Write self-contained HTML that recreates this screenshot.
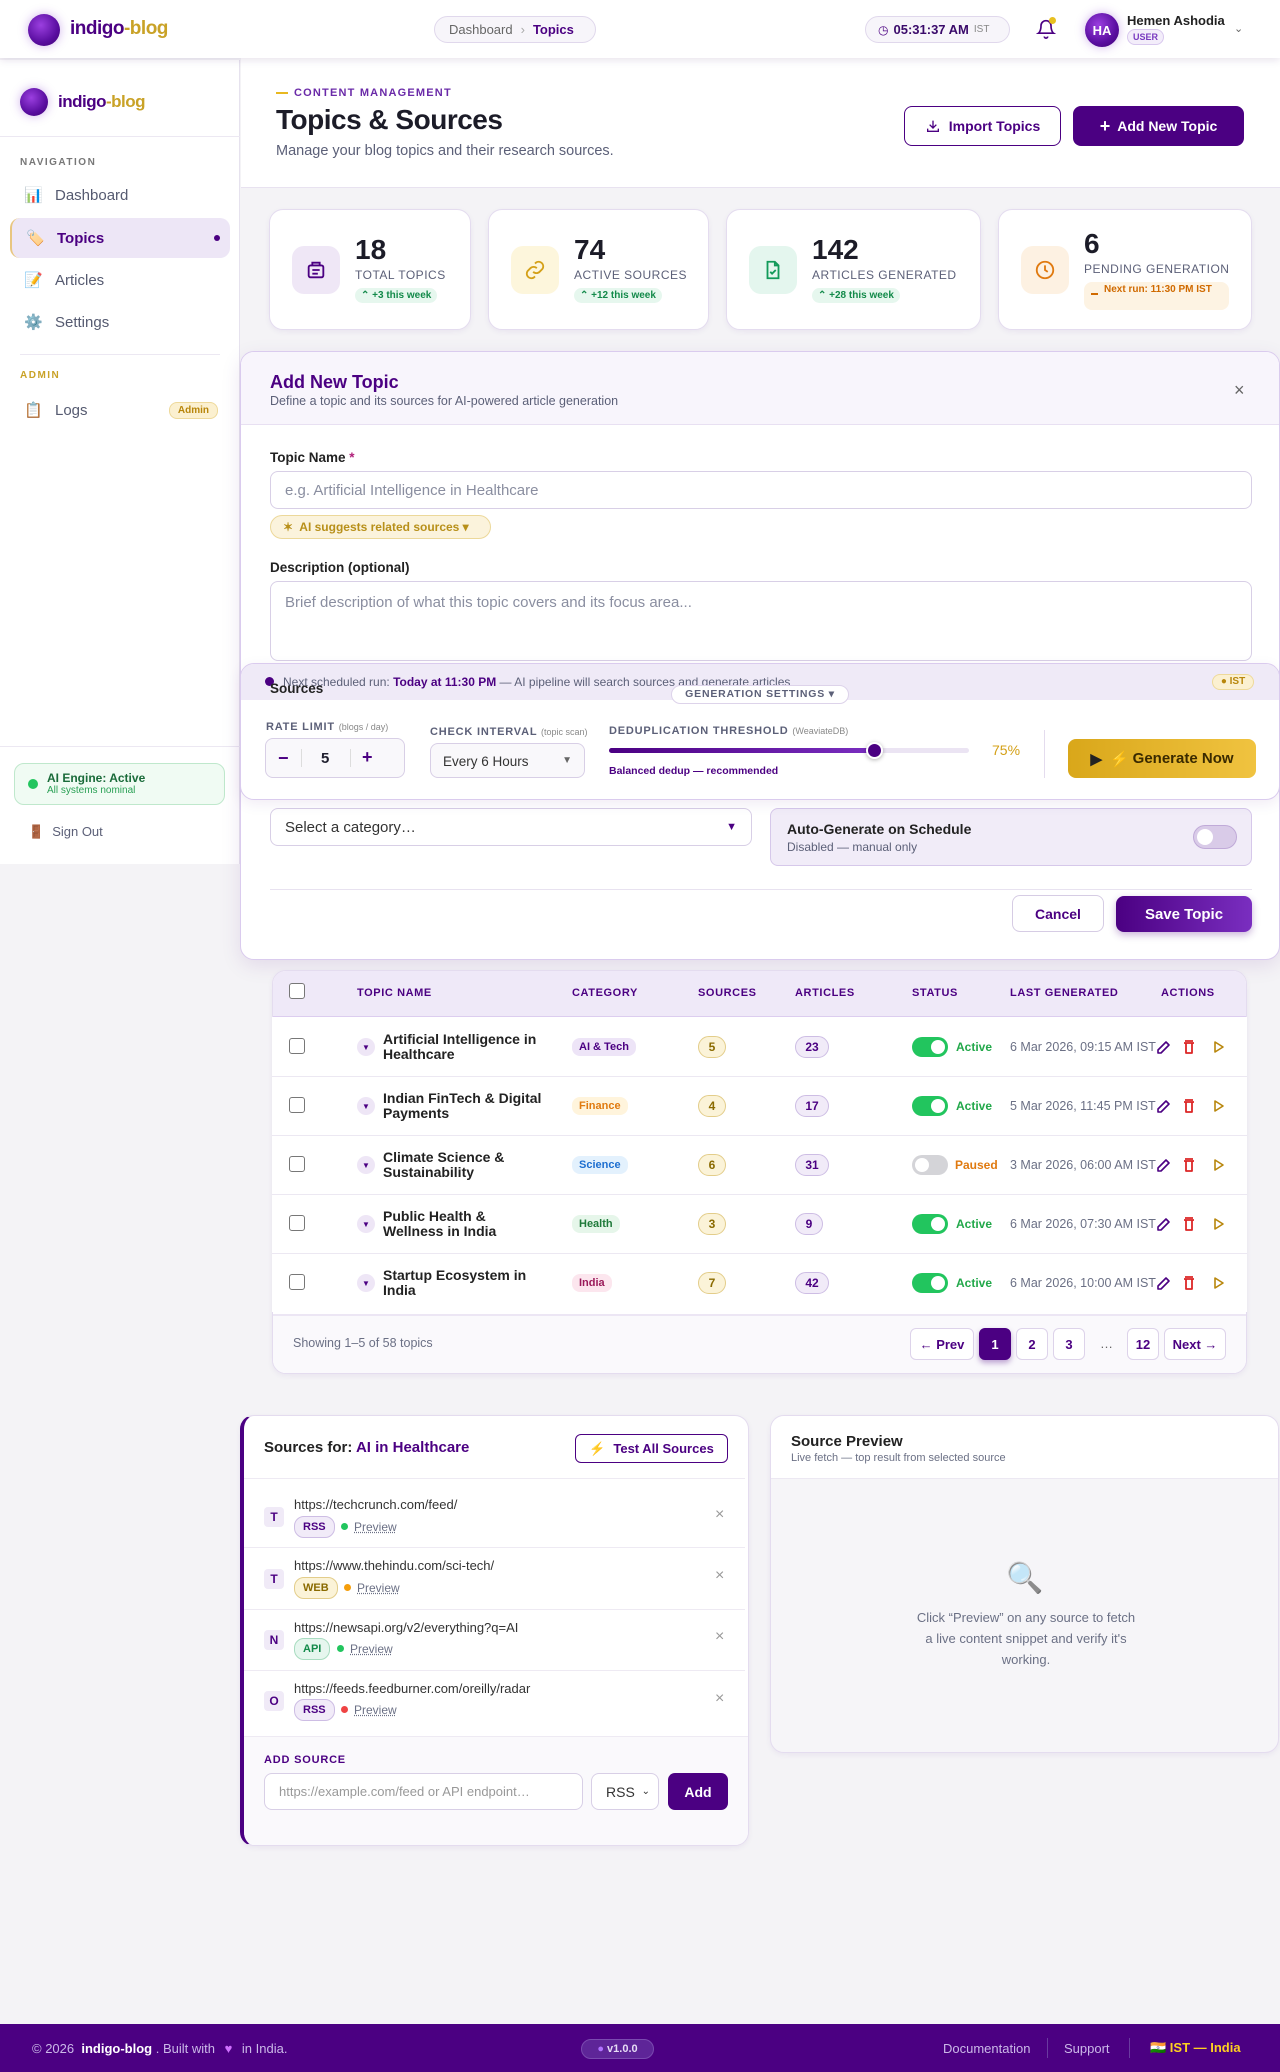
<!DOCTYPE html>
<html><head><meta charset="utf-8">
<style>
*{box-sizing:border-box;margin:0;padding:0}
body{width:1280px;height:2072px;position:relative;background:#f4f3f6;font-family:"Liberation Sans",Arial,sans-serif;color:#1f1f2e;overflow:hidden}
.a{position:absolute}
.pill{border-radius:999px}
.hdr{left:0;top:0;width:1280px;height:58px;background:#fff;box-shadow:0 2px 8px rgba(60,20,100,.12);z-index:5}
.orb{border-radius:50%;background:radial-gradient(circle at 40% 35%,#9b3fe0,#5a0ea0 60%,#3d0070);box-shadow:0 0 10px rgba(120,40,200,.35)}
.logo{font-weight:700;color:#4b0082;letter-spacing:-.5px}
.logo span{color:#c9a227}
.side{left:0;top:60px;width:240px;height:804px;background:#fff;border-right:1px solid #e6e2ee}
.nav{left:10px;width:220px;height:40px;border-radius:10px;font-size:15px;color:#555a70;display:flex;align-items:center;padding-left:14px}
.nav i{font-style:normal;width:31px;font-size:15px}
.card{background:#fff;border:1px solid #e4dcef;border-radius:14px;box-shadow:0 2px 6px rgba(75,0,130,.06)}
.ico{width:48px;height:48px;border-radius:12px;display:flex;align-items:center;justify-content:center}
.num{font-size:28px;font-weight:700;color:#1c1c28}
.lbl{font-size:12px;color:#5c6078;letter-spacing:.5px}
.up{font-size:10px;font-weight:700;color:#138a4a;background:#e6f7ee;border-radius:8px;padding:2px 6px}
.inp{background:#fff;border:1px solid #d8cfe6;border-radius:8px;font-size:15px;color:#8a8ea0;padding-left:14px;display:flex;align-items:center}
.th{font-size:11px;font-weight:700;color:#4b0082;letter-spacing:.6px;top:987px}
.row{left:272px;width:975px;height:59px;border-top:1px solid #ece8f2;background:#fff}
.cb{width:16px;height:16px;border:1.5px solid #777;border-radius:3px;background:#fff}
.car{width:18px;height:18px;border-radius:50%;background:#eee6f6;color:#4b0082;font-size:8px;display:flex;align-items:center;justify-content:center}
.tn{font-size:14px;font-weight:700;color:#222;line-height:15px;width:160px}
.cat{font-size:11px;font-weight:700;border-radius:8px;padding:3px 7px}
.cnt{height:22px;border-radius:11px;font-size:12px;font-weight:700;display:flex;align-items:center;justify-content:center}
.tg{width:36px;height:20px;border-radius:10px;background:#22c55e}
.tg:after{content:"";position:absolute;right:3px;top:3px;width:14px;height:14px;border-radius:50%;background:#fff}
.tg.off{background:#d4d4d8}.tg.off:after{left:3px;right:auto}
.st{font-size:12px;font-weight:700;color:#22a84a}
.dt{font-size:12.5px;color:#6b7085}
.pg{height:32px;border:1px solid #ddd3ea;border-radius:6px;background:#fff;font-size:13px;font-weight:700;color:#4b0082;display:flex;align-items:center;justify-content:center}
.src{left:244px;width:505px;height:62px;border-top:1px solid #eeeaf3;background:#fff}
.let{width:20px;height:20px;border-radius:4px;background:#f0eaf7;color:#4b0082;font-size:12px;font-weight:700;display:flex;align-items:center;justify-content:center}
.url{font-size:13px;color:#333}
.bd{font-size:11px;font-weight:700;border-radius:10px;padding:4px 8px}
.dot{width:7px;height:7px;border-radius:50%}
.pv{font-size:12px;color:#6b7085;text-decoration:underline dotted}
.x{font-size:16px;color:#999}
</style></head><body>

<div class="a hdr">
  <div class="a orb" style="left:28px;top:14px;width:32px;height:32px"></div>
  <div class="a logo" style="left:70px;top:18px;font-size:19px">indigo<span>-blog</span></div>
  <div class="a pill" style="left:434px;top:16px;width:162px;height:27px;border:1px solid #e0d8ec;background:#f7f5fa;font-size:13px;color:#666;display:flex;align-items:center;padding-left:14px">Dashboard <span style="margin:0 8px;color:#aaa">›</span><b style="color:#4b0082">Topics</b></div>
  <div class="a pill" style="left:865px;top:16px;width:145px;height:27px;border:1px solid #e0d8ec;background:#f7f5fa;font-size:13px;display:flex;align-items:center;padding-left:12px"><span style="color:#4b0082;font-size:12px;margin-right:5px">◷</span><b style="color:#3a0a6a">05:31:37 AM</b><span style="font-size:10px;color:#888;margin-left:5px">IST</span></div>
  <svg class="a" style="left:1036px;top:18px" width="20" height="22" viewBox="0 0 24 24" fill="none" stroke="#4b0082" stroke-width="2"><path d="M6 8a6 6 0 0112 0c0 7 3 9 3 9H3s3-2 3-9M10 21a2 2 0 004 0"/></svg>
  <div class="a" style="left:1049px;top:17px;width:7px;height:7px;border-radius:50%;background:#e8c020"></div>
  <div class="a orb" style="left:1085px;top:13px;width:34px;height:34px;color:#fff;font-size:13px;font-weight:700;display:flex;align-items:center;justify-content:center">HA</div>
  <div class="a" style="left:1127px;top:13px;font-size:13px;font-weight:700;color:#222">Hemen Ashodia</div>
  <div class="a" style="left:1127px;top:29px;font-size:9px;font-weight:700;color:#7a3bc0;border:1px solid #d8c8ee;background:#f3edfa;border-radius:8px;padding:2px 5px">USER</div>
  <div class="a" style="left:1234px;top:22px;font-size:11px;color:#666">⌄</div>
</div>

<div class="a side">
  <div class="a orb" style="left:20px;top:28px;width:28px;height:28px"></div>
  <div class="a logo" style="left:58px;top:32px;font-size:17px">indigo<span>-blog</span></div>
  <div class="a" style="left:0;top:76px;width:240px;height:1px;background:#ece8f2"></div>
  <div class="a" style="left:20px;top:97px;font-size:10px;font-weight:700;letter-spacing:1.5px;color:#777">NAVIGATION</div>
  <div class="a nav" style="top:115px"><i>📊</i>Dashboard</div>
  <div class="a nav" style="top:158px;background:#ede6f6;border-left:2px solid #e8c680;color:#4b0082;font-weight:700"><i>🏷️</i>Topics<span style="position:absolute;right:10px;top:17px;width:6px;height:6px;border-radius:50%;background:#4b0082"></span></div>
  <div class="a nav" style="top:200px"><i>📝</i>Articles</div>
  <div class="a nav" style="top:242px"><i>⚙️</i>Settings</div>
  <div class="a" style="left:20px;top:294px;width:200px;height:1px;background:#ece8f2"></div>
  <div class="a" style="left:20px;top:310px;font-size:10px;font-weight:700;letter-spacing:1.5px;color:#c9a227">ADMIN</div>
  <div class="a nav" style="top:330px"><i>📋</i>Logs<span style="position:absolute;right:12px;font-size:10px;font-weight:700;color:#b8860b;background:#fbf0d0;border:1px solid #eed99a;border-radius:8px;padding:2px 8px">Admin</span></div>
  <div class="a" style="left:0;top:686px;width:240px;height:1px;background:#ece8f2"></div>
  <div class="a" style="left:14px;top:703px;width:211px;height:42px;border:1px solid #bfe8cc;background:#f0fbf3;border-radius:10px">
    <div class="a" style="left:13px;top:15px;width:10px;height:10px;border-radius:50%;background:#22c55e"></div>
    <div class="a" style="left:32px;top:7px;font-size:12px;font-weight:700;color:#1a6b3a">AI Engine: Active</div>
    <div class="a" style="left:32px;top:21px;font-size:10px;color:#2aa055">All systems nominal</div>
  </div>
  <div class="a" style="left:28px;top:764px;font-size:13px;color:#5c6078"><span style="margin-right:8px">🚪</span>Sign Out</div>
</div>

<div class="a" style="left:241px;top:58px;width:1039px;height:130px;background:#fff;border-bottom:1px solid #e8e2f0"></div>
<div class="a" style="left:276px;top:87px;font-size:11px;font-weight:700;letter-spacing:1.2px;color:#6a2aa8"><span style="display:inline-block;width:12px;height:2px;background:#e8b820;vertical-align:middle;margin-right:6px"></span>CONTENT MANAGEMENT</div>
<div class="a" style="left:276px;top:104px;font-size:28px;font-weight:700;color:#1c1c28;letter-spacing:-.5px">Topics &amp; Sources</div>
<div class="a" style="left:276px;top:143px;font-size:14.5px;color:#5c6078">Manage your blog topics and their research sources.</div>
<div class="a" style="left:904px;top:106px;width:157px;height:40px;border:1.5px solid #4b0082;border-radius:8px;background:#fff;color:#4b0082;font-size:14px;font-weight:700;display:flex;align-items:center;justify-content:center"><svg width="16" height="16" viewBox="0 0 24 24" fill="none" stroke="#4b0082" stroke-width="2" style="margin-right:8px"><path d="M12 4v11M7 10l5 5 5-5M4 16v4h16v-4"/></svg>Import Topics</div>
<div class="a" style="left:1073px;top:106px;width:171px;height:40px;border-radius:8px;background:#4b0082;color:#fff;font-size:14px;font-weight:700;display:flex;align-items:center;justify-content:center"><span style="font-size:18px;margin-right:7px">+</span>Add New Topic</div>

<div class="a card" style="left:269px;top:209px;width:202px;height:121px">
  <div class="a ico" style="left:22px;top:36px;background:#efe7f6"><svg width="22" height="22" viewBox="0 0 24 24" fill="none" stroke="#4b0082" stroke-width="2"><rect x="4" y="7" width="16" height="13" rx="2"/><path d="M8 7V4h8v3M8 12h8M8 16h6"/></svg></div>
  <div class="a num" style="left:85px;top:24px">18</div><div class="a lbl" style="left:85px;top:58px">TOTAL TOPICS</div><div class="a up" style="left:85px;top:78px">⌃ +3 this week</div>
</div>
<div class="a card" style="left:488px;top:209px;width:221px;height:121px">
  <div class="a ico" style="left:22px;top:36px;background:#fdf6dc"><svg width="22" height="22" viewBox="0 0 24 24" fill="none" stroke="#d4a017" stroke-width="2"><path d="M10 14a5 5 0 007 0l3-3a5 5 0 00-7-7l-1 1M14 10a5 5 0 00-7 0l-3 3a5 5 0 007 7l1-1"/></svg></div>
  <div class="a num" style="left:85px;top:24px">74</div><div class="a lbl" style="left:85px;top:58px">ACTIVE SOURCES</div><div class="a up" style="left:85px;top:78px">⌃ +12 this week</div>
</div>
<div class="a card" style="left:726px;top:209px;width:255px;height:121px">
  <div class="a ico" style="left:22px;top:36px;background:#e4f6ee"><svg width="22" height="22" viewBox="0 0 24 24" fill="none" stroke="#129a5a" stroke-width="2"><path d="M14 3H6v18h12V7zM14 3v4h4M9 14l2 2 4-4"/></svg></div>
  <div class="a num" style="left:85px;top:24px">142</div><div class="a lbl" style="left:85px;top:58px">ARTICLES GENERATED</div><div class="a up" style="left:85px;top:78px">⌃ +28 this week</div>
</div>
<div class="a card" style="left:998px;top:209px;width:254px;height:121px">
  <div class="a ico" style="left:22px;top:36px;background:#fdf1e2"><svg width="22" height="22" viewBox="0 0 24 24" fill="none" stroke="#e07a10" stroke-width="2"><circle cx="12" cy="12" r="9"/><path d="M12 7v5l3 2"/></svg></div>
  <div class="a num" style="left:85px;top:18px">6</div><div class="a lbl" style="left:85px;top:52px">PENDING GENERATION</div>
  <div class="a" style="left:85px;top:72px;width:145px;height:28px;background:#fdf3e3;border-radius:8px;font-size:10px;font-weight:700;color:#d06a00;padding:2px 8px 0 20px;line-height:12px"><span style="position:absolute;left:7px;top:11px;width:7px;height:2px;background:#d06a00"></span>Next run: 11:30 PM IST</div>
</div>

<div class="a" style="left:240px;top:351px;width:1040px;height:609px;background:#fff;border:1px solid #dacbee;border-radius:14px;box-shadow:0 6px 20px rgba(75,0,130,.1);overflow:hidden">
  <div class="a" style="left:0;top:0;width:1040px;height:73px;background:#f8f5fc;border-bottom:1px solid #e8e0f2"></div>
  <div class="a" style="left:29px;top:20px;font-size:18px;font-weight:700;color:#4b0082">Add New Topic</div>
  <div class="a" style="left:29px;top:42px;font-size:12.5px;color:#5c6078">Define a topic and its sources for AI-powered article generation</div>
  <div class="a" style="left:993px;top:28px;font-size:18px;color:#666">×</div>
  <div class="a" style="left:29px;top:98px;font-size:13.5px;font-weight:700;color:#222">Topic Name <span style="color:#b0207a">*</span></div>
  <div class="a inp" style="left:29px;top:119px;width:982px;height:38px">e.g. Artificial Intelligence in Healthcare</div>
  <div class="a pill" style="left:29px;top:163px;width:221px;height:24px;background:#fbf3dc;border:1px solid #ecd89a;font-size:12px;font-weight:700;color:#b8901a;display:flex;align-items:center;padding-left:12px">✶&nbsp; AI suggests related sources ▾</div>
  <div class="a" style="left:29px;top:208px;font-size:13.5px;font-weight:700;color:#222">Description (optional)</div>
  <div class="a inp" style="left:29px;top:229px;width:982px;height:80px;align-items:flex-start;padding-top:12px">Brief description of what this topic covers and its focus area...</div>
  <div class="a inp" style="left:29px;top:456px;width:482px;height:38px;color:#333">Select a category…<span style="position:absolute;right:14px;color:#4b0082;font-size:11px">▼</span></div>
  <div class="a" style="left:529px;top:456px;width:482px;height:58px;background:#f1ecf8;border:1px solid #d6c8ea;border-radius:8px">
    <div class="a" style="left:16px;top:12px;font-size:14px;font-weight:700;color:#222">Auto-Generate on Schedule</div>
    <div class="a" style="left:16px;top:31px;font-size:12px;color:#5c6078">Disabled — manual only</div>
    <div class="a" style="left:422px;top:16px;width:44px;height:24px;border-radius:12px;background:#d9cbe8;border:1px solid #c0aad8"><div class="a" style="left:3px;top:3px;width:16px;height:16px;border-radius:50%;background:#fff"></div></div>
  </div>
  <div class="a" style="left:29px;top:537px;width:982px;height:1px;background:#e8e2f0"></div>
  <div class="a" style="left:771px;top:543px;width:92px;height:37px;border:1px solid #d6cce4;border-radius:8px;font-size:14px;font-weight:700;color:#4b0082;display:flex;align-items:center;justify-content:center;background:#fff">Cancel</div>
  <div class="a" style="left:875px;top:544px;width:136px;height:36px;border-radius:8px;background:linear-gradient(90deg,#4b0082,#7a2ec0);font-size:15px;font-weight:700;color:#fff;display:flex;align-items:center;justify-content:center;box-shadow:0 3px 8px rgba(75,0,130,.3)">Save Topic</div>
</div>

<div class="a" style="left:240px;top:663px;width:1040px;height:137px;background:#fff;border:1px solid #dacbee;border-radius:14px;box-shadow:0 4px 14px rgba(75,0,130,.08);overflow:hidden">
  <div class="a" style="left:0;top:0;width:1040px;height:36px;background:#efeaf7"></div>
  <div class="a" style="left:24px;top:13px;width:9px;height:9px;border-radius:50%;background:#4b0082"></div>
  <div class="a" style="left:42px;top:11px;font-size:12px;color:#5c6078">Next scheduled run: <b style="color:#4b0082">Today at 11:30 PM</b> — AI pipeline will search sources and generate articles</div>
  <div class="a" style="left:29px;top:17px;font-size:13.5px;font-weight:700;color:#222">Sources</div>
  <div class="a pill" style="left:971px;top:10px;width:42px;height:16px;background:#fbf0d0;border:1px solid #eed99a;font-size:10px;font-weight:700;color:#b8860b;text-align:center;line-height:14px">● IST</div>
  <div class="a" style="left:25px;top:57px;font-size:11px;font-weight:700;color:#5c6078;letter-spacing:.8px">RATE LIMIT <span style="font-size:9px;font-weight:400;letter-spacing:0;color:#888">(blogs / day)</span></div>
  <div class="a" style="left:24px;top:74px;width:140px;height:40px;border:1px solid #d8cfe6;border-radius:8px;background:#f9f8fb;font-size:15px">
    <span class="a" style="left:12px;top:9px;font-weight:700;color:#4b0082;font-size:18px">−</span>
    <span class="a" style="left:35px;top:10px;width:1px;height:18px;background:#ddd"></span>
    <span class="a" style="left:55px;top:11px;font-weight:700">5</span>
    <span class="a" style="left:84px;top:10px;width:1px;height:18px;background:#ddd"></span>
    <span class="a" style="left:96px;top:8px;font-weight:700;color:#4b0082;font-size:18px">+</span>
  </div>
  <div class="a" style="left:189px;top:62px;font-size:11px;font-weight:700;color:#5c6078;letter-spacing:.8px">CHECK INTERVAL <span style="font-size:9px;font-weight:400;letter-spacing:0;color:#888">(topic scan)</span></div>
  <div class="a" style="left:189px;top:79px;width:155px;height:35px;border:1px solid #d8cfe6;border-radius:8px;background:#f9f8fb;font-size:13.5px;color:#333;padding:10px 0 0 12px">Every 6 Hours<span style="position:absolute;right:12px;top:11px;font-size:10px;color:#666">▼</span></div>
  <div class="a" style="left:368px;top:61px;font-size:11px;font-weight:700;color:#5c6078;letter-spacing:.8px">DEDUPLICATION THRESHOLD <span style="font-size:9px;font-weight:400;letter-spacing:0;color:#888">(WeaviateDB)</span></div>
  <div class="a" style="left:368px;top:84px;width:360px;height:5px;border-radius:3px;background:#ebe4f3"></div>
  <div class="a" style="left:368px;top:84px;width:265px;height:5px;border-radius:3px;background:linear-gradient(90deg,#4b0082,#7a2ec0)"></div>
  <div class="a" style="left:625px;top:78px;width:17px;height:17px;border-radius:50%;background:#4b0082;border:2px solid #fff;box-shadow:0 1px 4px rgba(0,0,0,.3)"></div>
  <div class="a" style="left:751px;top:78px;font-size:14px;color:#d4a017">75%</div>
  <div class="a" style="left:368px;top:101px;font-size:10.5px;font-weight:700;color:#4b0082">Balanced dedup — recommended</div>
  <div class="a" style="left:803px;top:66px;width:1px;height:48px;background:#e4dcee"></div>
  <div class="a" style="left:827px;top:75px;width:188px;height:39px;border-radius:8px;background:linear-gradient(90deg,#d9a71a,#f0c340);font-size:15px;font-weight:700;color:#3a2a00;display:flex;align-items:center;justify-content:center"><span style="color:#222;margin-right:8px">▶</span><span style="color:#f5d020;margin-right:4px">⚡</span>Generate Now</div>
</div>
<div class="a pill" style="left:671px;top:685px;width:178px;height:19px;background:#fff;border:1px solid #ddd3ea;font-size:10.5px;font-weight:700;color:#5c6078;letter-spacing:.8px;text-align:center;line-height:17px">GENERATION SETTINGS ▾</div>

<div class="a card" style="left:272px;top:970px;width:975px;height:404px;overflow:hidden;border-radius:14px">
  <div class="a" style="left:0;top:0;width:975px;height:47px;background:#efe9f8;border-bottom:2px solid #dccdef"></div>
  <div class="a" style="left:0;top:343px;width:975px;height:61px;background:#faf9fc;border-top:2px solid #ece6f4"></div>
</div>
<div class="a cb" style="left:289px;top:983px"></div>
<div class="a th" style="left:357px">TOPIC NAME</div><div class="a th" style="left:572px">CATEGORY</div><div class="a th" style="left:698px">SOURCES</div><div class="a th" style="left:795px">ARTICLES</div><div class="a th" style="left:912px">STATUS</div><div class="a th" style="left:1010px">LAST GENERATED</div><div class="a th" style="left:1161px">ACTIONS</div>

<div class="a row" style="top:1017px;border-top:none"></div>
<div class="a row" style="top:1076px"></div>
<div class="a row" style="top:1135px"></div>
<div class="a row" style="top:1194px"></div>
<div class="a row" style="top:1253px"></div>

<div class="a cb" style="left:289px;top:1038px"></div><div class="a car" style="left:357px;top:1038px">▼</div>
<div class="a tn" style="left:383px;top:1032px">Artificial Intelligence in Healthcare</div>
<div class="a cat" style="left:572px;top:1038px;background:#ede4f7;color:#4b0082">AI &amp; Tech</div>
<div class="a cnt" style="left:698px;top:1036px;width:28px;background:#fbf3d8;border:1px solid #e3cd8a;color:#8a6a00">5</div>
<div class="a cnt" style="left:795px;top:1036px;width:34px;background:#f1ebf8;border:1px solid #cdbde4;color:#4b0082">23</div>
<div class="a tg" style="left:912px;top:1037px"></div><div class="a st" style="left:956px;top:1040px">Active</div>
<div class="a dt" style="left:1010px;top:1040px">6 Mar 2026, 09:15 AM IST</div>

<div class="a cb" style="left:289px;top:1097px"></div><div class="a car" style="left:357px;top:1097px">▼</div>
<div class="a tn" style="left:383px;top:1091px">Indian FinTech &amp; Digital Payments</div>
<div class="a cat" style="left:572px;top:1097px;background:#fff4dc;color:#e07a10">Finance</div>
<div class="a cnt" style="left:698px;top:1095px;width:28px;background:#fbf3d8;border:1px solid #e3cd8a;color:#8a6a00">4</div>
<div class="a cnt" style="left:795px;top:1095px;width:34px;background:#f1ebf8;border:1px solid #cdbde4;color:#4b0082">17</div>
<div class="a tg" style="left:912px;top:1096px"></div><div class="a st" style="left:956px;top:1099px">Active</div>
<div class="a dt" style="left:1010px;top:1099px">5 Mar 2026, 11:45 PM IST</div>

<div class="a cb" style="left:289px;top:1156px"></div><div class="a car" style="left:357px;top:1156px">▼</div>
<div class="a tn" style="left:383px;top:1150px">Climate Science &amp; Sustainability</div>
<div class="a cat" style="left:572px;top:1156px;background:#e3f1fd;color:#1e6fd0">Science</div>
<div class="a cnt" style="left:698px;top:1154px;width:28px;background:#fbf3d8;border:1px solid #e3cd8a;color:#8a6a00">6</div>
<div class="a cnt" style="left:795px;top:1154px;width:34px;background:#f1ebf8;border:1px solid #cdbde4;color:#4b0082">31</div>
<div class="a tg off" style="left:912px;top:1155px"></div><div class="a st" style="left:955px;top:1158px;color:#e07a10">Paused</div>
<div class="a dt" style="left:1010px;top:1158px">3 Mar 2026, 06:00 AM IST</div>

<div class="a cb" style="left:289px;top:1215px"></div><div class="a car" style="left:357px;top:1215px">▼</div>
<div class="a tn" style="left:383px;top:1209px">Public Health &amp; Wellness in India</div>
<div class="a cat" style="left:572px;top:1215px;background:#e6f6ea;color:#1f7a3a">Health</div>
<div class="a cnt" style="left:698px;top:1213px;width:28px;background:#fbf3d8;border:1px solid #e3cd8a;color:#8a6a00">3</div>
<div class="a cnt" style="left:795px;top:1213px;width:28px;background:#f1ebf8;border:1px solid #cdbde4;color:#4b0082">9</div>
<div class="a tg" style="left:912px;top:1214px"></div><div class="a st" style="left:956px;top:1217px">Active</div>
<div class="a dt" style="left:1010px;top:1217px">6 Mar 2026, 07:30 AM IST</div>

<div class="a cb" style="left:289px;top:1274px"></div><div class="a car" style="left:357px;top:1274px">▼</div>
<div class="a tn" style="left:383px;top:1268px">Startup Ecosystem in India</div>
<div class="a cat" style="left:572px;top:1274px;background:#fce6ee;color:#9a1a5a">India</div>
<div class="a cnt" style="left:698px;top:1272px;width:28px;background:#fbf3d8;border:1px solid #e3cd8a;color:#8a6a00">7</div>
<div class="a cnt" style="left:795px;top:1272px;width:34px;background:#f1ebf8;border:1px solid #cdbde4;color:#4b0082">42</div>
<div class="a tg" style="left:912px;top:1273px"></div><div class="a st" style="left:956px;top:1276px">Active</div>
<div class="a dt" style="left:1010px;top:1276px">6 Mar 2026, 10:00 AM IST</div>

<svg class="a" style="left:1148px;top:1036px" width="90" height="260" viewBox="0 0 90 260">
  <g id="ac" fill="none" stroke-width="1.6" stroke-linejoin="round">
    <path d="M10 14l8-8 3 3-8 8H10z" stroke="#4b0082"/>
    <path d="M37 5h8M36 7h10M38 7v10h6V7" stroke="#dc2626" stroke-width="1.8"/>
    <path d="M67 6l8 5-8 5z" stroke="#b8860b"/>
  </g>
  <use href="#ac" y="59"/><use href="#ac" y="118"/><use href="#ac" y="177"/><use href="#ac" y="236"/>
</svg>

<div class="a" style="left:293px;top:1336px;font-size:12.5px;color:#6b7085">Showing 1–5 of 58 topics</div>
<div class="a pg" style="left:910px;top:1328px;width:64px">← Prev</div>
<div class="a pg" style="left:979px;top:1328px;width:32px;background:#4b0082;color:#fff;border-color:#4b0082;box-shadow:0 3px 6px rgba(75,0,130,.35)">1</div>
<div class="a pg" style="left:1016px;top:1328px;width:32px">2</div>
<div class="a pg" style="left:1053px;top:1328px;width:32px">3</div>
<div class="a" style="left:1100px;top:1336px;font-size:13px;color:#666">…</div>
<div class="a pg" style="left:1127px;top:1328px;width:32px">12</div>
<div class="a pg" style="left:1164px;top:1328px;width:62px">Next →</div>

<div class="a card" style="left:240px;top:1415px;width:509px;height:431px;border-left:4px solid #4b0082;overflow:hidden">
  <div class="a" style="left:0;top:320px;width:505px;height:111px;background:#faf9fc;border-top:1px solid #eeeaf3"></div>
</div>
<div class="a" style="left:264px;top:1439px;font-size:15px;font-weight:700;color:#222">Sources for: <span style="color:#4b0082">AI in Healthcare</span></div>
<div class="a" style="left:575px;top:1434px;width:153px;height:29px;border:1.5px solid #4b0082;border-radius:6px;font-size:13px;font-weight:700;color:#4b0082;display:flex;align-items:center;justify-content:center;background:#fff"><span style="color:#f0b820;margin-right:8px">⚡</span>Test All Sources</div>
<div class="a src" style="top:1478px;width:501px"></div>
<div class="a src" style="top:1547px;width:501px"></div>
<div class="a src" style="top:1609px;width:501px"></div>
<div class="a src" style="top:1670px;width:501px"></div>

<div class="a let" style="left:264px;top:1507px">T</div><div class="a url" style="left:294px;top:1497px">https://techcrunch.com/feed/</div>
<div class="a bd" style="left:294px;top:1516px;background:#f1ebf8;border:1px solid #cdbde4;color:#4b0082">RSS</div>
<div class="a dot" style="left:341px;top:1523px;background:#22c55e"></div><div class="a pv" style="left:354px;top:1520px">Preview</div><div class="a x" style="left:715px;top:1506px">×</div>

<div class="a let" style="left:264px;top:1569px">T</div><div class="a url" style="left:294px;top:1558px">https://www.thehindu.com/sci-tech/</div>
<div class="a bd" style="left:294px;top:1577px;background:#fbf3d8;border:1px solid #e3cd8a;color:#8a6a00">WEB</div>
<div class="a dot" style="left:344px;top:1584px;background:#f59e0b"></div><div class="a pv" style="left:357px;top:1581px">Preview</div><div class="a x" style="left:715px;top:1567px">×</div>

<div class="a let" style="left:264px;top:1630px">N</div><div class="a url" style="left:294px;top:1620px">https://newsapi.org/v2/everything?q=AI</div>
<div class="a bd" style="left:294px;top:1638px;background:#e6f6ee;border:1px solid #a8dcc0;color:#138a4a">API</div>
<div class="a dot" style="left:337px;top:1645px;background:#22c55e"></div><div class="a pv" style="left:350px;top:1642px">Preview</div><div class="a x" style="left:715px;top:1628px">×</div>

<div class="a let" style="left:264px;top:1691px">O</div><div class="a url" style="left:294px;top:1681px">https://feeds.feedburner.com/oreilly/radar</div>
<div class="a bd" style="left:294px;top:1699px;background:#f1ebf8;border:1px solid #cdbde4;color:#4b0082">RSS</div>
<div class="a dot" style="left:341px;top:1706px;background:#ef4444"></div><div class="a pv" style="left:354px;top:1703px">Preview</div><div class="a x" style="left:715px;top:1690px">×</div>

<div class="a" style="left:264px;top:1754px;font-size:11px;font-weight:700;color:#4b0082;letter-spacing:.8px">ADD SOURCE</div>
<div class="a inp" style="left:264px;top:1773px;width:319px;height:37px;font-size:13px;color:#999">https://example.com/feed or API endpoint…</div>
<div class="a inp" style="left:591px;top:1773px;width:68px;height:37px;font-size:14px;color:#333">RSS<span style="position:absolute;right:8px;font-size:10px">⌄</span></div>
<div class="a" style="left:668px;top:1773px;width:60px;height:37px;border-radius:7px;background:#4b0082;color:#fff;font-size:14px;font-weight:700;display:flex;align-items:center;justify-content:center">Add</div>

<div class="a card" style="left:770px;top:1415px;width:509px;height:338px;overflow:hidden;background:#f6f5f8">
  <div class="a" style="left:0;top:0;width:509px;height:63px;background:#fff;border-bottom:1px solid #ece8f2"></div>
  <div class="a" style="left:20px;top:17px;font-size:15px;font-weight:700;color:#222">Source Preview</div>
  <div class="a" style="left:20px;top:36px;font-size:11px;color:#6b7085">Live fetch — top result from selected source</div>
  <div class="a" style="left:235px;top:145px;font-size:30px;opacity:.7">🔍</div>
  <div class="a" style="left:142px;top:191px;width:226px;text-align:center;font-size:13px;line-height:21px;color:#6b7085">Click “Preview” on any source to fetch a live content snippet and verify it's working.</div>
</div>

<div class="a" style="left:0;top:2024px;width:1280px;height:48px;background:#4b0082"></div>
<div class="a" style="left:32px;top:2041px;font-size:13px;color:#cbb8e8">© 2026 &nbsp;<b style="color:#fff">indigo-blog</b> . Built with <span style="color:#d070ff;margin:0 6px">♥</span> in India.</div>
<div class="a pill" style="left:581px;top:2039px;width:73px;height:20px;border:1px solid #7a4ab0;background:#5e2598;font-size:11px;font-weight:700;color:#e6dcf5;text-align:center;line-height:18px"><span style="color:#b070ff">●</span> v1.0.0</div>
<div class="a" style="left:943px;top:2041px;font-size:13px;color:#cbb8e8">Documentation</div>
<div class="a" style="left:1047px;top:2038px;width:1px;height:20px;background:#6a3aa0"></div>
<div class="a" style="left:1064px;top:2041px;font-size:13px;color:#cbb8e8">Support</div>
<div class="a" style="left:1129px;top:2038px;width:1px;height:20px;background:#6a3aa0"></div>
<div class="a" style="left:1150px;top:2040px;font-size:13px;font-weight:700;color:#ffd020">🇮🇳 IST — India</div>
</body></html>
